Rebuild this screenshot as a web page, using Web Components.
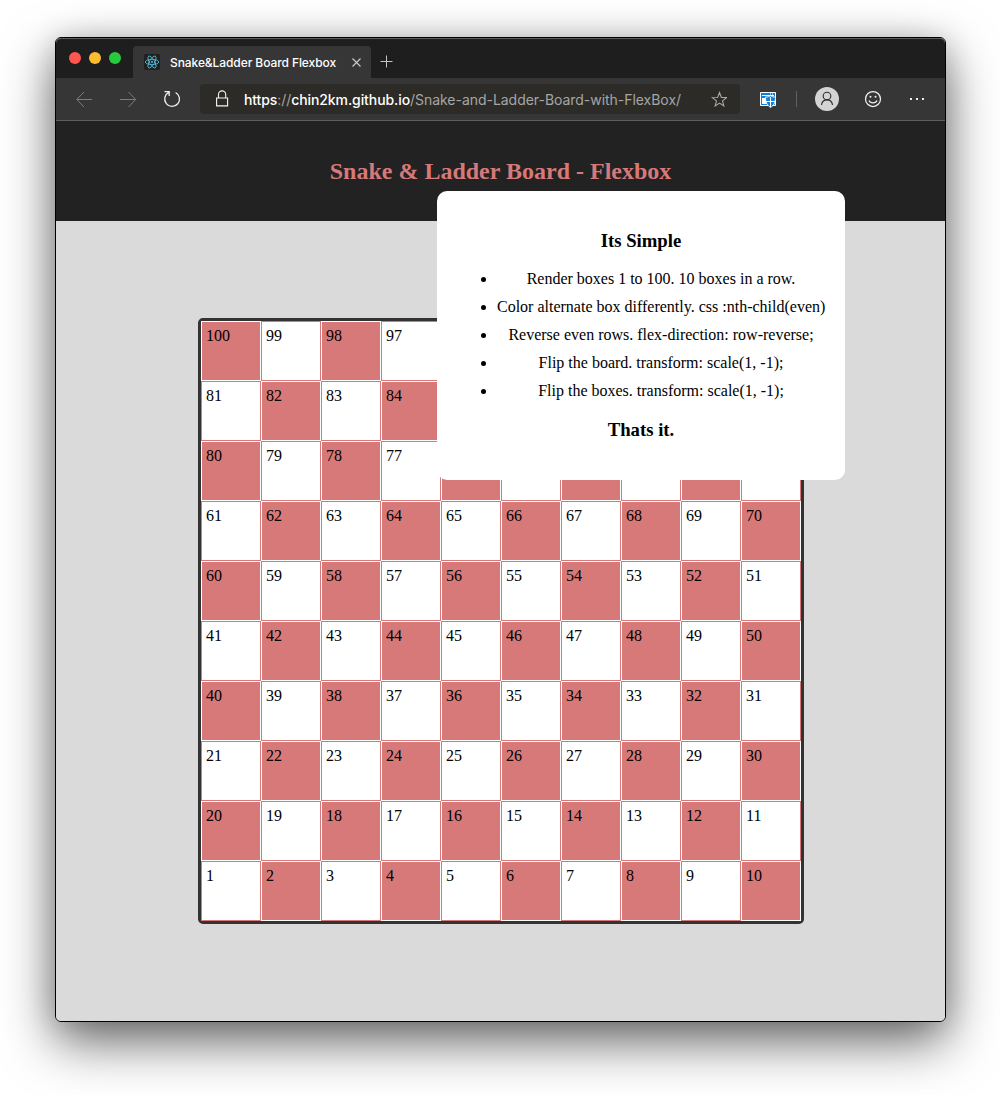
<!DOCTYPE html>
<html lang="en">
<head>
<meta charset="utf-8">
<title>Snake&amp;Ladder Board Flexbox</title>
<style>
html,body{margin:0;background:#fff}
body{width:1001px;height:1095px;overflow:hidden;font-family:"Liberation Serif","Times New Roman",serif;font-size:16px;color:#000}
</style>
</head>
<body>
<browser-window>
  <tab-strip slot="tabs">Snake&amp;Ladder Board Flexbox</tab-strip>
  <address-toolbar slot="toolbar"></address-toolbar>
  <page-header>Snake &amp; Ladder Board - Flexbox</page-header>
  <page-main><snake-board></snake-board></page-main>
  <info-card slot="overlay"></info-card>
</browser-window>
<script>
function define(name, html, setup) {
  customElements.define(name, class extends HTMLElement {
    constructor() {
      super();
      const t = document.createElement('template');
      t.innerHTML = html;
      this.attachShadow({ mode: 'open' }).appendChild(t.content.cloneNode(true));
      if (setup) setup(this.shadowRoot, this);
    }
  });
}

// Tracks a run of text so that it fills the width given in data-w.
function fitText(root) {
  root.querySelectorAll('[data-w]').forEach(el => {
    const n = (el.textContent.trim() || root.host.textContent.trim()).length;
    const diff = Number(el.dataset.w) - el.getBoundingClientRect().width;
    el.style.letterSpacing = (diff / n) + 'px';
  });
}

define('browser-window', `
<style>
:host{display:block;padding:37px 55px 73px;box-sizing:border-box;width:1001px;height:1095px}
.frame{position:relative;box-sizing:border-box;width:891px;height:985px;border:1px solid #000;border-radius:6px;background:#dadada;display:flex;flex-direction:column;box-shadow:0 20px 52px rgba(0,0,0,.58),0 2px 30px rgba(0,0,0,.16)}
</style>
<div class="frame"><slot name="tabs"></slot><slot name="toolbar"></slot><slot></slot><slot name="overlay"></slot></div>`);

define('tab-strip', `
<style>
:host{display:flex;height:40px;box-sizing:border-box;background:#1e1e1e;border-top:1px solid #5d5d5d;border-radius:5px 5px 0 0;font-family:Inter,sans-serif}
.lights{display:flex;gap:8px;padding:13px 0 0 13px;width:64px;box-sizing:content-box}
i{width:12px;height:12px;border-radius:50%}
.tab{width:238px;height:32px;margin-top:7px;background:#363636;border-radius:4px 4px 0 0;display:flex;align-items:center;box-sizing:border-box;padding-left:11px}
.ico{width:16px;height:16px;background:#202020;border-radius:2px;display:flex}
.t{width:178px;margin-left:10px;font-size:12px;font-weight:500;color:#fff;white-space:nowrap}
.plus{margin:16px 0 0 9px}
svg{display:block}
</style>
<div class="lights"><i style="background:#ff5750"></i><i style="background:#fdbc2e"></i><i style="background:#27c93f"></i></div>
<div class="tab"><div class="ico"><svg width="16" height="16" viewBox="0 0 16 16" fill="none" stroke="#53bddb" stroke-width=".85"><ellipse cx="8" cy="8" rx="6.7" ry="2.6"/><ellipse cx="8" cy="8" rx="6.7" ry="2.6" transform="rotate(60 8 8)"/><ellipse cx="8" cy="8" rx="6.7" ry="2.6" transform="rotate(120 8 8)"/><circle cx="8" cy="8" r="1.1" fill="#53bddb" stroke="none"/></svg></div>
<div class="t"><span data-w="166"><slot></slot></span></div>
<svg width="16" height="16" viewBox="0 0 16 16" stroke="#c8c8c8" stroke-width="1.2"><path d="M4.5 4.5l8 8M12.5 4.5l-8 8"/></svg></div>
<svg class="plus" width="14" height="14" stroke="#c4c4c4" stroke-width="1"><path d="M6.5 .5v12M.5 6.5h12"/></svg>`, fitText);

define('address-toolbar', `
<style>
:host{display:flex;height:43px;box-sizing:border-box;background:#363636;border-bottom:1px solid #5e5e5e;font-family:Inter,sans-serif;align-items:center;padding-left:20px}
svg{display:block;flex:none;fill:none}
.bar{width:540px;height:30px;border-radius:4px;background:#2c2b28;margin-left:19px;display:flex;align-items:center}
.url{width:467px;margin-left:14px;font-size:14px;color:#a6a6a4;white-space:nowrap}
b{font-weight:500;color:#fff}
.sep{width:1px;height:16px;background:#606060;margin:0 18px 0 20px}
</style>
<svg width="17" height="16" stroke="#7d7d7d"><path d="M16 8.5H1M8 1L.8 8.5 8 16"/></svg>
<svg width="17" height="16" stroke="#7d7d7d" style="margin-left:27px"><path d="M0 8.5h15.5M8.5 1l7.2 7.5L8.5 16"/></svg>
<svg width="18" height="18" stroke="#f0f0f0" stroke-width="1.3" style="margin-left:26px"><path d="M5.800 2.400A7.400 7.400 0 1 0 12.600 2.500M1.500 1.600H6.200V6.100"/></svg>
<div class="bar">
<svg width="14" height="18" stroke="#f5f5f5" stroke-width="1.1" style="margin-left:16px"><path d="M.6 8h11v7.900H.6zM2.500 8V4.500a3.600 3.600 0 0 1 7.200 0V8"/></svg>
<div class="url"><span data-w="166"><b>https</b>://<b>chin2km.github.io</b></span><span data-w="271">/Snake-and-Ladder-Board-with-FlexBox/</span></div>
<svg width="16" height="16" stroke="#aaa" stroke-width="1.05"><path d="M8.500 1.500l1.900 4.900 5.200.2-4.100 3.300 1.400 5.100-4.400-2.900-4.400 2.900 1.400-5.100L1.400 6.600l5.200-.2z"/></svg>
</div>
<svg width="17" height="17" style="margin-left:20px"><path fill="#0f7fd8" stroke="#fff" d="M.5 1.500h15v13H.5z"/><path stroke="#fff" d="M2 4.500h12"/><path stroke="#fff" stroke-width="1" d="M10 3h1M12 3h1"/><path fill="#fff" d="M2 7h6v6H2z"/><path fill="#0f7fd8" stroke="#fff" stroke-width=".9" d="M10.500 4.700c1.500 1 3 1.400 5 1.400 0 4.400-1 7.800-5 10.400-4-2.600-5-6-5-10.400 2 0 3.500-.4 5-1.400z"/><path stroke="#fff" d="M10.500 6v10M6 10.500h9.500"/></svg>
<div class="sep" style="margin-left:19px"></div>
<svg width="24" height="24" stroke="#303030" stroke-width="1.150"><circle cx="12" cy="12" r="12" fill="#d4d4d4" stroke="none"/><circle cx="12" cy="9" r="3.800"/><path d="M6.500 18c.3-3.200 2.500-5.200 5.500-5.200s5.200 2 5.500 5.200"/></svg>
<svg width="18" height="18" stroke="#f0f0f0" stroke-width="1.250" style="margin-left:25px"><circle cx="9" cy="9" r="7.500"/><path d="M5 10.500c1.300 3.200 6.700 3.200 8 0"/><g fill="#f0f0f0" stroke="none"><circle cx="6.500" cy="6.700" r="1"/><circle cx="11.500" cy="6.700" r="1"/></g></svg>
<svg width="16" height="4" style="margin-left:27px"><path fill="#eee" d="M1 1h2v2H1zM7 1h2v2H7zM13 1h2v2h-2z"/></svg>`, fitText);

define('page-header', `
<style>:host{display:flex;height:100px;background:#222;align-items:center;justify-content:center}
h2{margin:0;font-size:24px;line-height:28px;color:#d87979}</style><h2><slot></slot></h2>`);

define('page-main', `
<style>:host{display:flex;flex:1;align-items:center;justify-content:center;background:#dadada;border-radius:0 0 5px 5px;padding:0 1px 0 1px}</style><slot></slot>`);

define('board-cell', `
<style>:host{display:block;box-sizing:border-box;width:60px;height:60px;padding:5px 4.500px;border:1px solid #d87979;background:#fff;line-height:18px}
:host([filled]){background:#d87979;border-color:#fff}</style><slot></slot>`);

define('snake-board', `
<style>:host{display:flex;flex-direction:column;border:3px solid #333;border-radius:5px;width:600px}
.row{display:flex}</style>`, root => {
  for (let r = 0; r < 10; r++) {
    const row = document.createElement('div');
    row.className = 'row';
    for (let c = 0; c < 10; c++) {
      const cell = document.createElement('board-cell');
      // Cells behind the info card carry no number.
      const covered = r < 3 && c > 3;
      if (!covered) cell.textContent = r % 2 ? 91 - 10 * r + c : 100 - 10 * r - c;
      if ((r + c) % 2 === 0) cell.setAttribute('filled', '');
      row.appendChild(cell);
    }
    root.appendChild(row);
  }
});

define('info-card', `
<style>:host{display:block;position:absolute;left:381px;top:153px;width:408px;height:289px;box-sizing:border-box;padding:40px 20px 0;background:#fff;border-radius:10px;text-align:center}
h3{margin:0;font-size:18.720px;line-height:20px}
ul{margin:14px 0 15px;padding-left:40px}
li{height:28px;line-height:28px;white-space:nowrap}</style>
<h3>Its Simple</h3>
<ul><li>Render boxes 1 to 100. 10 boxes in a row.</li><li>Color alternate box differently. css :nth-child(even)</li><li>Reverse even rows. flex-direction: row-reverse;</li><li>Flip the board. transform: scale(1, -1);</li><li>Flip the boxes. transform: scale(1, -1);</li></ul>
<h3>Thats it.</h3>`);
</script>
</body>
</html>
